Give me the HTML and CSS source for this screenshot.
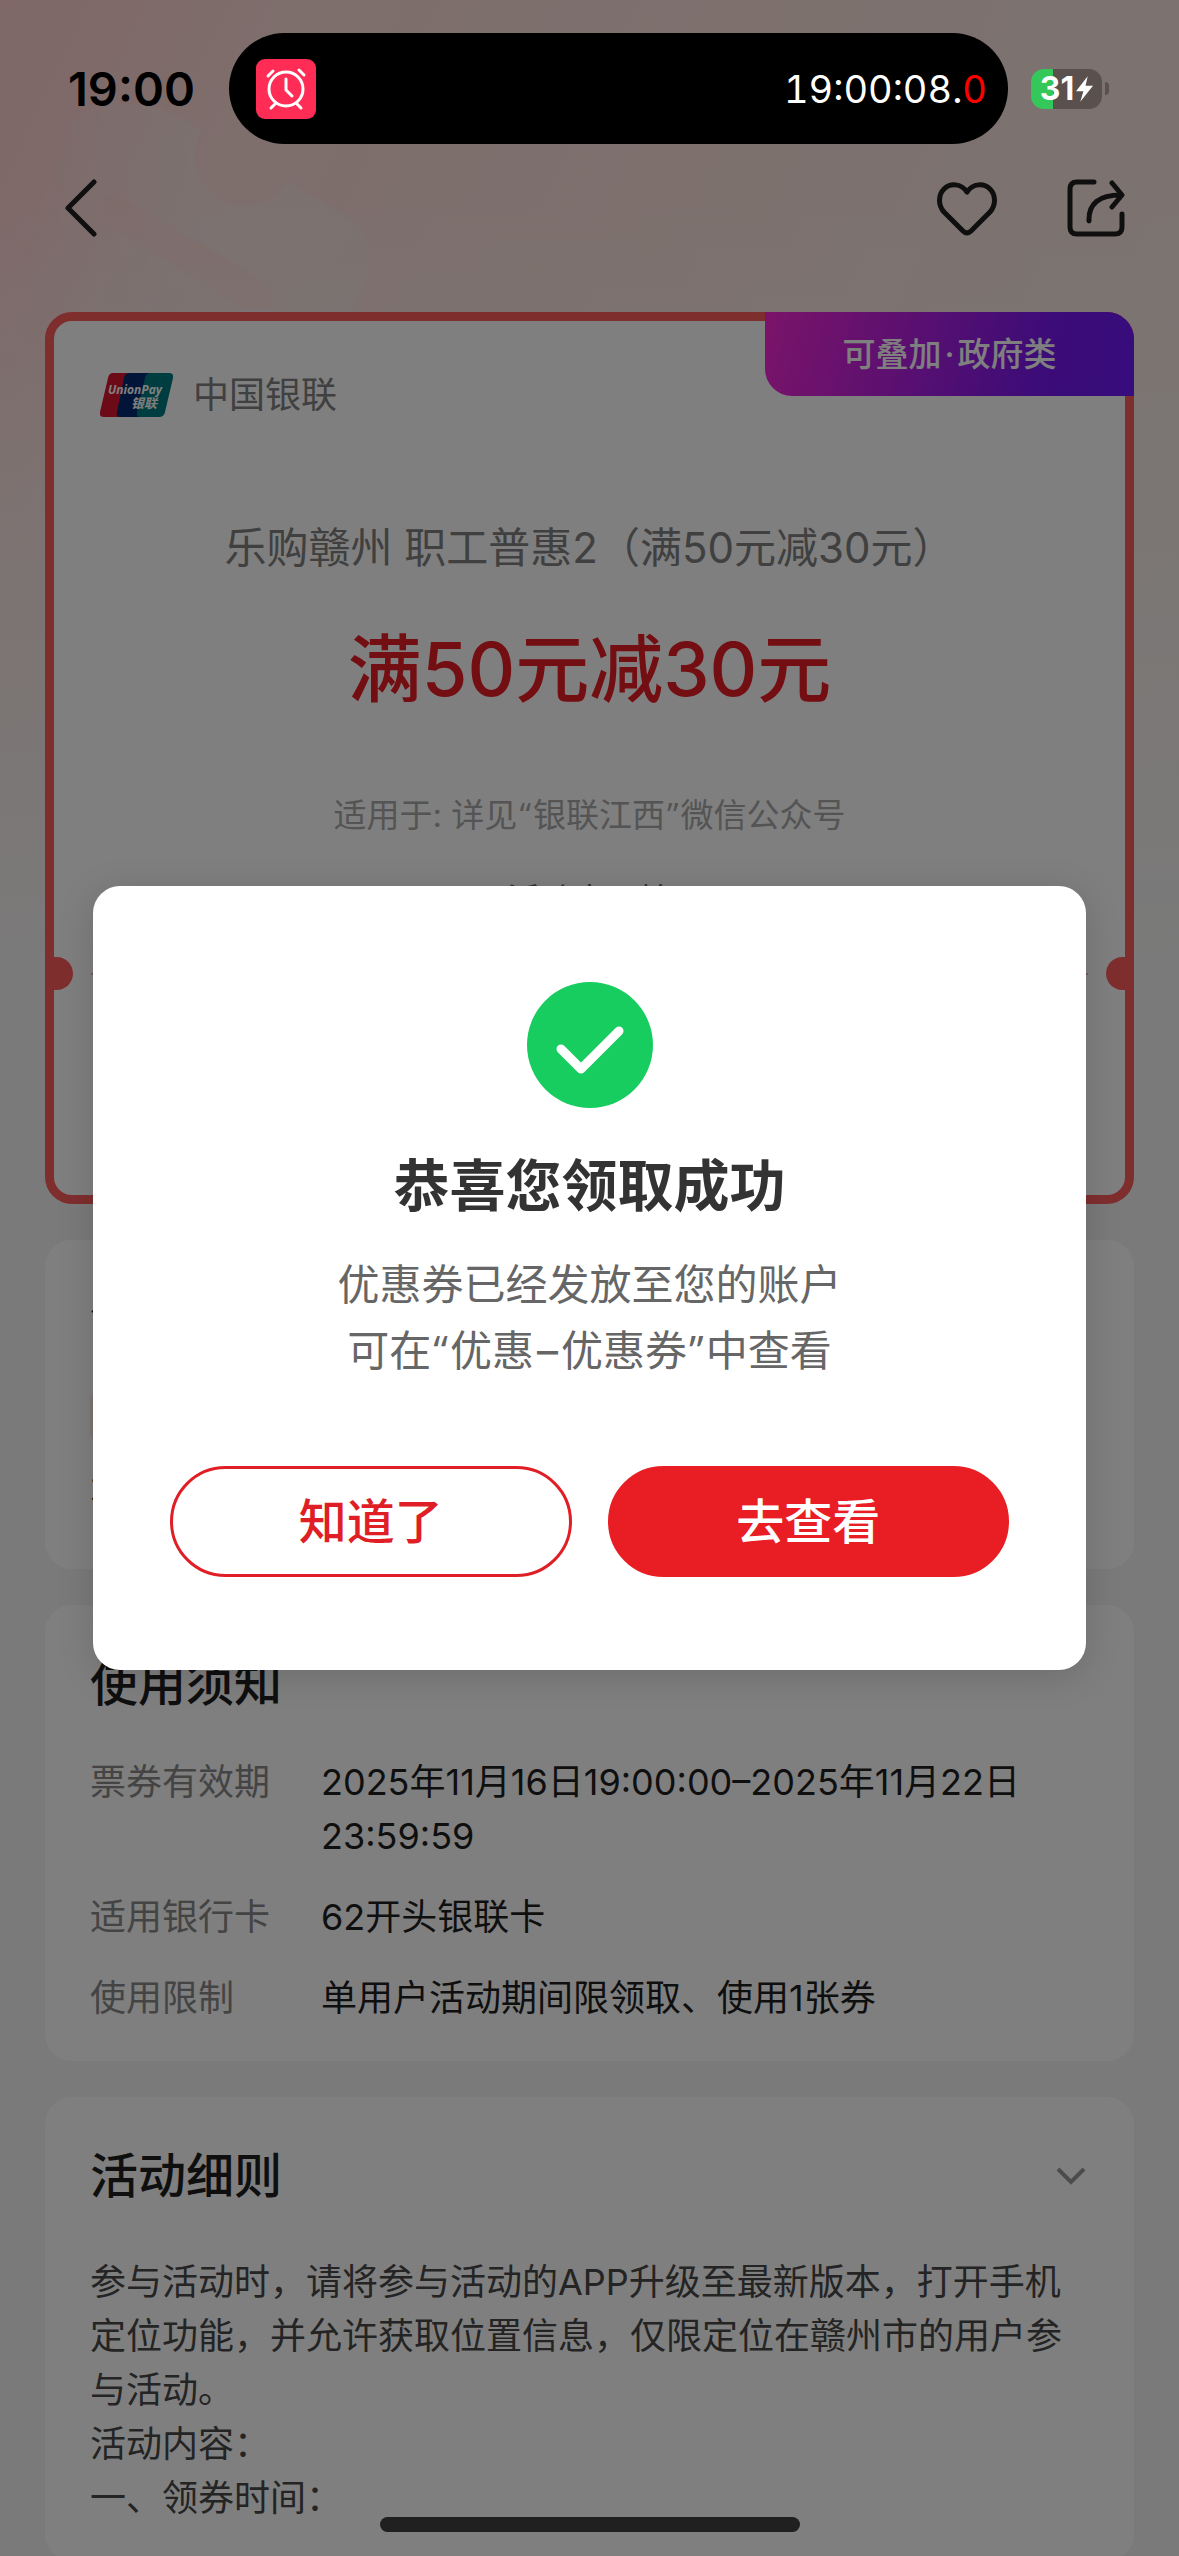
FILE: index.html
```html
<!DOCTYPE html>
<html lang="zh-CN">
<head>
<meta charset="utf-8">
<meta name="viewport" content="width=device-width, initial-scale=1">
<title>优惠券详情</title>
<link rel="stylesheet" href="styles.css">
</head>
<body>
<div class="screen">
  <svg class="watermark" viewBox="0 0 400 340" aria-hidden="true">
    <defs>
      <linearGradient id="fade" x1="0" y1="0" x2="1" y2="0">
        <stop offset="0" stop-color="#eef4f2" stop-opacity="0"/>
        <stop offset="0.5" stop-color="#eef4f2"/>
      </linearGradient>
    </defs>
    <path fill="url(#fade)" fill-rule="evenodd" d="M75 118Q100 96 160 108L202 130A49 49 0 0 0 288 181L348 218Q378 240 367 275Q360 295 340 340H20Q4 300 30 230ZM103 205A12 12 0 0 1 125 198L262 280Q280 292 272 304Q262 314 240 306L108 226Q98 216 103 205Z"/>
  </svg>

  <header class="status-bar">
    <time class="clock">19:00</time>
    <div class="island">
      <svg class="alarm" viewBox="0 0 60 60" aria-hidden="true">
        <rect width="60" height="60" rx="9" fill="#ff2d55"/>
        <g fill="none" stroke="#fff" stroke-width="3" stroke-linecap="round" stroke-linejoin="round">
          <circle cx="30" cy="30" r="17"/>
          <path d="M30 20V31L36 37M20 44L15 49M40 44L45 49"/>
          <path d="M12 17L17 12M43 11L48 16"/>
        </g>
      </svg>
      <span class="timer">19:00:08.<span class="timer-tick">0</span></span>
    </div>
    <div class="battery">
      <div class="battery-body">31<svg class="bolt" viewBox="0 0 16 24" aria-hidden="true"><path d="M11 0L0 14H7L4 24L16 9H9Z" fill="#fff"/></svg></div>
      <div class="battery-nub"></div>
    </div>
  </header>

  <nav class="nav">
    <button class="icon-button" aria-label="返回">
      <svg width="32" height="58" viewBox="0 0 32 58"><path d="M29 3L3 29L29 55"/></svg>
    </button>
    <div class="nav-actions">
      <button class="icon-button" aria-label="收藏">
        <svg width="62" height="58" viewBox="0 0 62 58"><path d="M31 13C25 4 14 4 8 10C2 16 2 26 8 33L27 52Q31 56 35 52L54 33C60 26 60 16 54 10C48 4 37 4 31 13Z"/></svg>
      </button>
      <button class="icon-button" aria-label="分享">
        <svg width="58" height="58" viewBox="0 0 58 58"><path d="M27 3H10Q3 3 3 10V48Q3 55 10 55H48Q55 55 55 48V35M22 42Q21 16 54 16M45 4L55 16L45 28"/></svg>
      </button>
    </div>
  </nav>

  <main class="content">
    <section class="ticket">
      <span class="badge">可叠加<span class="dot">·</span>政府类</span>
      <div class="brand">
        <svg class="brand-logo" viewBox="0 0 73 44" role="img" aria-label="UnionPay 银联">
          <clipPath id="plate"><path d="M13 0H69Q74 0 73 5L65 39Q64 44 59 44H4Q-1 44 0 39L8 5Q9 0 13 0Z"/></clipPath>
          <g clip-path="url(#plate)">
            <path fill="#d8142e" d="M0 0H40V44H0Z"/>
            <path fill="#04296e" d="M30 0Q25 0 24 5L17 39Q16 44 20 44H60V0Z"/>
            <path fill="#007a80" d="M50 0Q46 0 45 5L37 39Q36 44 40 44H73V0Z"/>
          </g>
          <text x="8" y="21" class="logo-latin">UnionPay</text>
          <text x="31" y="35" class="logo-han">银联</text>
        </svg>
        <span class="brand-name">中国银联</span>
      </div>
      <h1 class="coupon-name">乐购赣州 职工普惠2（满50元减30元）</h1>
      <p class="coupon-value">满50元减30元</p>
      <p class="coupon-scope">适用于: 详见<span class="quote">“</span>银联江西<span class="quote">”</span>微信公众号</p>
      <p class="coupon-state">活动未开始</p>
      <div class="tear"></div>
    </section>

    <section class="card conditions">
      <h2 class="card-title">领取条件</h2>
      <div class="tag"></div>
      <p class="condition">不限</p>
    </section>

    <section class="card">
      <h2 class="card-title">使用须知</h2>
      <dl class="facts">
        <dt>票券有效期</dt><dd>2025年11月16日19:00:00–2025年11月22日 23:59:59</dd>
        <dt>适用银行卡</dt><dd>62开头银联卡</dd>
        <dt>使用限制</dt><dd>单用户活动期间限领取、使用1张券</dd>
      </dl>
    </section>

    <section class="card">
      <h2 class="card-title">活动细则
        <svg class="chevron" viewBox="0 0 30 18" aria-hidden="true"><path d="M2 2L15 15L28 2"/></svg>
      </h2>
      <div class="rules">
        <p>参与活动时，请将参与活动的APP升级至最新版本，打开手机定位功能，并允许获取位置信息，仅限定位在赣州市的用户参与活动。</p>
        <p>活动内容：</p>
        <p>一、领券时间：</p>
      </div>
    </section>
  </main>

  <div class="overlay">
    <div class="dialog" role="dialog" aria-modal="true" aria-labelledby="dialog-title">
      <svg class="success" viewBox="0 0 126 126" aria-hidden="true">
        <circle cx="63" cy="63" r="63" fill="#18cd5f"/>
        <path d="M34 67L54 87L92 49" fill="none" stroke="#fff" stroke-width="9" stroke-linecap="round" stroke-linejoin="round"/>
      </svg>
      <h2 class="dialog-title" id="dialog-title">恭喜您领取成功</h2>
      <p class="dialog-text">优惠券已经发放至您的账户<br>可在<span class="quote">“</span>优惠<span class="dash">–</span>优惠券<span class="quote">”</span>中查看</p>
      <div class="dialog-actions">
        <button class="button">知道了</button>
        <button class="button button-primary">去查看</button>
      </div>
    </div>
  </div>
  <div class="home-indicator"></div>
</div>
</body>
</html>
```

FILE: styles.css
```css
* { box-sizing: border-box; margin: 0; padding: 0; }

body {
  font-family: Inter, "Noto Sans CJK SC", sans-serif;
  font-size: 36px;
  line-height: 54px;
  color: #1e1e1e;
}

.screen {
  position: relative;
  isolation: isolate;
  height: 100vh;
  overflow: hidden;
  background:
    linear-gradient(to bottom, transparent 200px, #f5f5f5 1000px) no-repeat,
    linear-gradient(115deg, #ffcfcf 0, #fcdcd8 12%, #fae0da 30%, #f8e8e2 60%, #f6eae4 100%);
}

.watermark {
  position: absolute;
  z-index: -1;
  top: 0;
  left: 0;
  width: 400px;
  opacity: 0.28;
}

.quote { padding: 0 2px; font-family: "Open Sans", sans-serif; line-height: 1; }
.dash { padding: 0 3px; }

/* Status bar */
.status-bar {
  position: relative;
  z-index: 2;
  display: grid;
  grid-template-columns: 161px 1fr 101px;
  align-items: center;
  padding: 33px 70px 0 68px;
  color: #000;
}
.clock { font-size: 47px; font-weight: 600; }
.island {
  display: flex;
  align-items: center;
  justify-content: space-between;
  height: 111px;
  padding: 0 21px 0 27px;
  border-radius: 56px;
  background: #000;
  color: #fff;
}
.alarm { width: 60px; height: 60px; }
.timer { font-size: 38px; font-variant-numeric: tabular-nums; }
.timer-tick { color: #f00; }
.battery { display: flex; align-items: center; justify-content: flex-end; gap: 3px; }
.battery-body {
  display: flex;
  align-items: center;
  justify-content: center;
  gap: 2px;
  width: 71px;
  height: 40px;
  border-radius: 13px;
  background: linear-gradient(to right, #34c759 31%, #5a504e 31%);
  color: #fff;
  font-size: 32px;
  font-weight: 700;
}
.bolt { width: 17px; height: 26px; }
.battery-nub { width: 4px; height: 13px; border-radius: 0 6px 6px 0; background: #5a504e; }

/* Navigation */
.nav {
  display: flex;
  align-items: center;
  justify-content: space-between;
  height: 128px;
  padding: 0 54px 0 65px;
}
.nav-actions { display: flex; gap: 69px; }
.icon-button { display: flex; border: 0; background: none; }
.icon-button svg { fill: none; stroke: #1e1e1e; stroke-width: 5; stroke-linecap: round; stroke-linejoin: round; }

.content { display: grid; gap: 36px; padding: 40px 45px 0; }

/* Ticket */
.ticket {
  position: relative;
  height: 892px;
  padding: 52px 46px 0;
  border: 9px solid #ff5c5c;
  border-radius: 27px;
  background: #fff;
  text-align: center;
}
.badge {
  position: absolute;
  top: -9px;
  right: -9px;
  width: 369px;
  border-radius: 0 27px 0 27px;
  background: linear-gradient(105deg, #f628d2, #7818f0 75%, #6e18fa);
  color: #fff;
  font-size: 33px;
  font-weight: 500;
  line-height: 84px;
}
.dot { padding: 0 3px; }
.brand { display: flex; align-items: center; gap: 20px; height: 44px; color: #808080; }
.brand-logo { width: 73px; height: 44px; }
.logo-latin { fill: #fff; font: italic 700 12px "Open Sans", sans-serif; }
.logo-han { fill: #fff; font: italic 700 13px "Noto Sans CJK SC", sans-serif; }
.coupon-name { margin-top: 98px; color: #808080; font-size: 42px; font-weight: 400; line-height: 66px; }
.coupon-value { margin-top: 34px; color: #e71d24; font-size: 74px; font-weight: 500; line-height: 108px; }
.coupon-scope { margin-top: 65px; color: #a8a8a8; font-size: 33px; }
.coupon-state { margin-top: 31px; color: #666; font-size: 33px; }
.tear {
  position: absolute;
  top: 652px;
  left: 37px;
  right: 37px;
  border-top: 2px dashed #f0b4b4;
}
.tear::before, .tear::after {
  content: "";
  position: absolute;
  top: -18px;
  width: 20px;
  height: 33px;
  background: #ff5c5c;
}
.tear::before { left: -38px; border-radius: 0 20px 20px 0; }
.tear::after { right: -38px; border-radius: 20px 0 0 20px; }

/* Cards */
.card { padding: 46px 46px 36px 45px; border-radius: 27px; background: #fff; }
.card-title {
  display: flex;
  align-items: center;
  justify-content: space-between;
  padding-right: 2px;
  font-size: 48px;
  font-weight: 500;
  line-height: 66px;
}
.chevron { width: 30px; fill: none; stroke: #999; stroke-width: 4; }
.conditions { height: 329px; }
.tag { width: 150px; height: 48px; margin-top: 41px; border-radius: 6px; background: #ffe8e8; }
.condition { margin-top: 27px; }
.facts {
  display: grid;
  grid-template-columns: 1fr 767px;
  row-gap: 27px;
  margin-top: 38px;
}
.facts dt { color: #888; }
.rules { margin-top: 46px; color: #484848; }

/* Result dialog */
.overlay {
  position: absolute;
  inset: 0;
  z-index: 1;
  display: flex;
  align-items: center;
  justify-content: center;
  padding: 0 93px;
  background: rgba(0, 0, 0, 0.5);
}
.dialog {
  display: flex;
  flex-direction: column;
  align-items: center;
  width: 100%;
  padding: 96px 77px 93px;
  border-radius: 27px;
  background: #fff;
  box-shadow: 0 6px 36px rgba(0, 0, 0, 0.15);
  text-align: center;
}
.success { width: 126px; height: 126px; }
.dialog-title { margin-top: 42px; color: #333; font-size: 56px; font-weight: 700; line-height: 72px; }
.dialog-text { margin-top: 30px; color: #666; font-size: 42px; line-height: 66px; }
.dialog-actions { display: grid; grid-template-columns: 1fr 1fr; gap: 36px; width: 100%; margin-top: 82px; }
.button {
  height: 111px;
  border: 3px solid #e01e26;
  border-radius: 56px;
  background: #fff;
  color: #e01e26;
  font-family: inherit;
  font-size: 48px;
  font-weight: 500;
  line-height: 66px;
}
.button-primary { border-color: #e91d24; background: #e91d24; color: #fff; }

.home-indicator {
  position: absolute;
  bottom: 24px;
  left: 50%;
  z-index: 2;
  width: 420px;
  height: 15px;
  margin-left: -210px;
  border-radius: 8px;
  background: #202020;
}
```
